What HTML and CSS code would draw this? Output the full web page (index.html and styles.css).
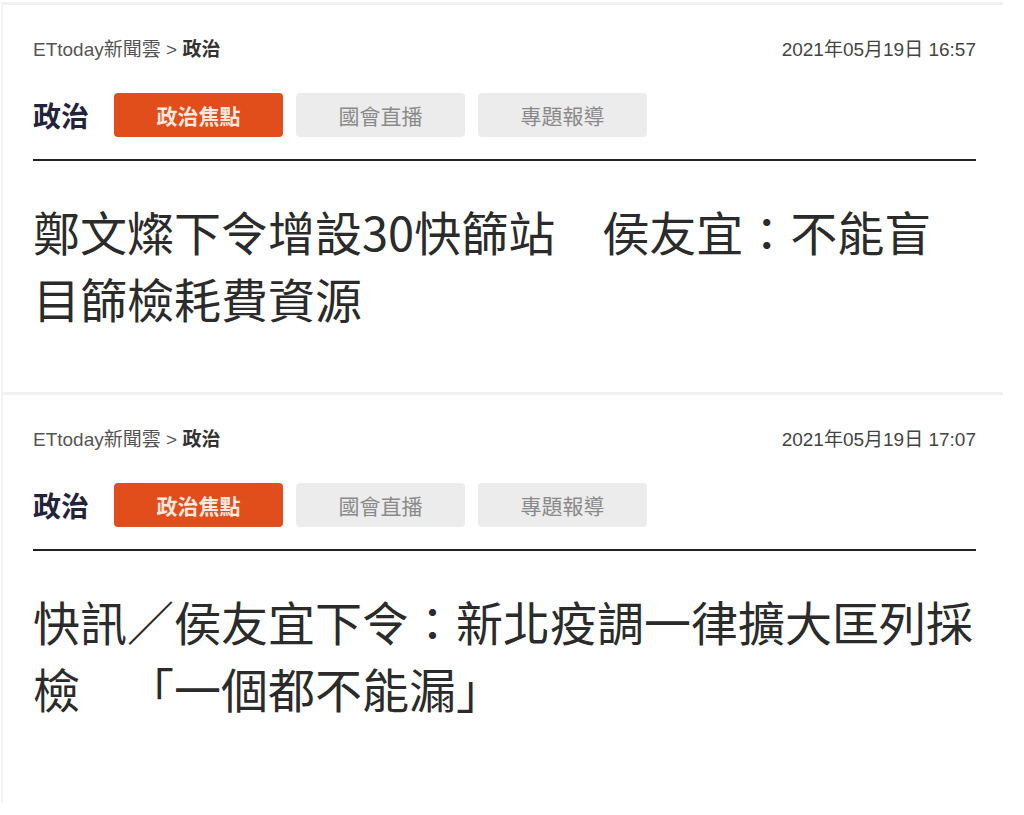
FILE: index.html
```html
<!DOCTYPE html>
<html lang="zh-Hant">
<head>
<meta charset="UTF-8">
<meta name="viewport" content="width=device-width, initial-scale=1.0">
<title>ETtoday新聞雲 政治</title>
<link rel="stylesheet" href="styles.css">
</head>
<body>
    <div class="page">
        <article class="panel">
            <div class="meta">
                <div class="crumb">ETtoday新聞雲 &gt; <b>政治</b></div>
                <time class="date">2021年05月19日 16:57</time>
            </div>
            <nav class="tabs">
                <h3 class="tabs-title">政治</h3>
                <a class="tab active">政治焦點</a>
                <a class="tab">國會直播</a>
                <a class="tab">專題報導</a>
            </nav>
            <h1 class="headline">鄭文燦下令增設30快篩站　侯友宜：不能盲<br>目篩檢耗費資源</h1>
        </article>
        <article class="panel last">
            <div class="meta">
                <div class="crumb">ETtoday新聞雲 &gt; <b>政治</b></div>
                <time class="date">2021年05月19日 17:07</time>
            </div>
            <nav class="tabs">
                <h3 class="tabs-title">政治</h3>
                <a class="tab active">政治焦點</a>
                <a class="tab">國會直播</a>
                <a class="tab">專題報導</a>
            </nav>
            <h1 class="headline">快訊／侯友宜下令：新北疫調一律擴大匡列採<br>檢　「一個都不能漏」</h1>
        </article>
    </div>
</body>
</html>
```

FILE: styles.css
```css
body {
    margin: 0;
    padding: 0;
    background-color: #fff;
    font-family: "Liberation Sans", "Noto Sans CJK TC", sans-serif;
    color: #333;
}
.page {
    padding: 2px 0 0 1px;
}
.panel {
    width: 1002px;
    height: 390px;
    box-sizing: border-box;
    padding: 34px 27px 0 30px;
    border-top: 3px solid #f1f1f1;
    border-left: 2px solid #f3f3f3;
}
.panel.last {
    height: 411px;
}
.meta {
    display: flex;
    justify-content: space-between;
    align-items: center;
    height: 22px;
    line-height: 22px;
}
.crumb {
    font-size: 19px;
    color: #555;
}
.crumb b {
    color: #333;
}
.date {
    font-size: 19px;
    color: #444;
}
.tabs {
    display: flex;
    align-items: center;
    margin-top: 32px;
    padding-bottom: 22px;
    border-bottom: 2px solid #222;
}
.tabs-title {
    margin: 0 25px 0 0;
    font-size: 28px;
    font-weight: bold;
    color: #23243a;
    font-family: "Noto Sans CJK TC", sans-serif;
}
.tab {
    display: flex;
    justify-content: center;
    align-items: center;
    width: 169px;
    height: 44px;
    margin-right: 13px;
    border-radius: 4px;
    background-color: #ececec;
    color: #8a8a8a;
    font-size: 21px;
    font-family: "Noto Sans CJK TC", sans-serif;
}
.tab.active {
    background-color: #e14d1b;
    color: #fbe8de;
    font-weight: bold;
}
.headline {
    margin: 36px 0 0 0;
    font-family: "Noto Sans CJK TC", sans-serif;
    font-size: 47px;
    font-weight: normal;
    line-height: 67px;
    color: #2b2b2b;
    text-spacing-trim: space-all;
}
```
